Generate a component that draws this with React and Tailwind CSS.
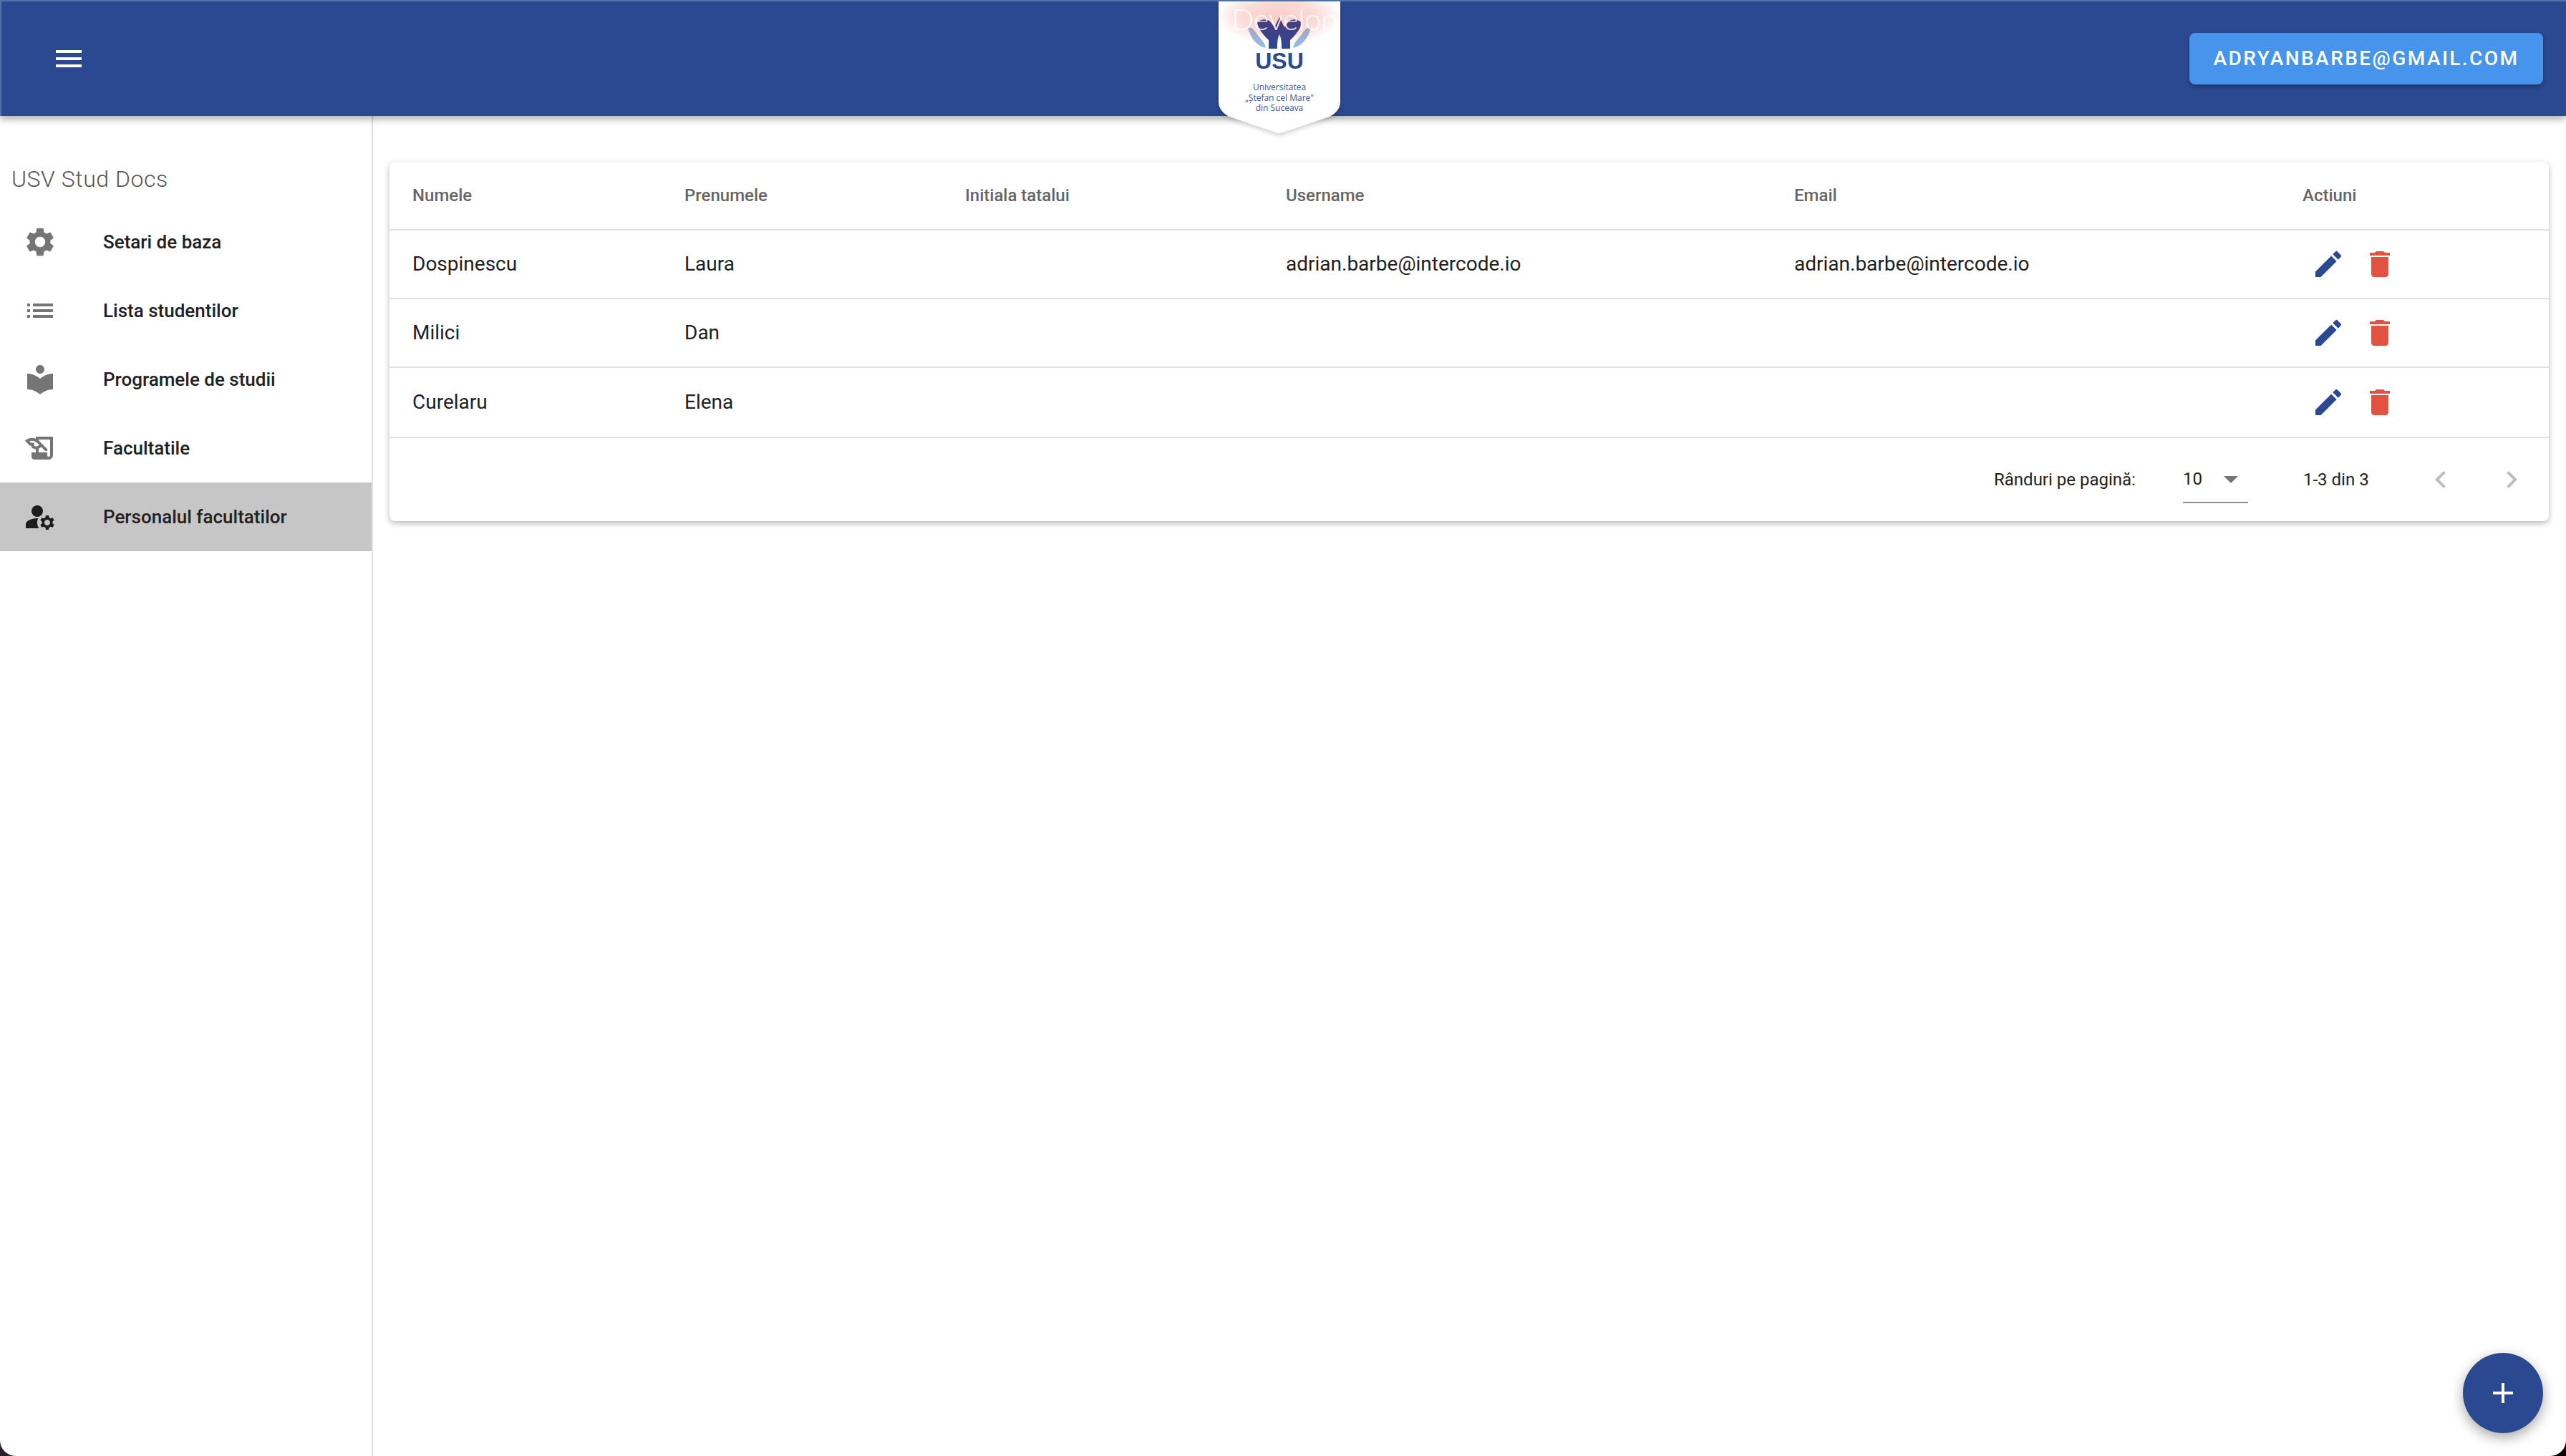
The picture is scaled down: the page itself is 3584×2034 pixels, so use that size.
import React from 'react';
import {
  MdMenu, MdSettings, MdList, MdLocalLibrary, MdHistoryEdu, MdManageAccounts,
  MdEdit, MdDelete, MdAdd, MdArrowDropDown, MdChevronLeft, MdChevronRight,
} from 'react-icons/md';

const navItems = [
  { label: 'Setari de baza', Icon: MdSettings },
  { label: 'Lista studentilor', Icon: MdList },
  { label: 'Programele de studii', Icon: MdLocalLibrary },
  { label: 'Facultatile', Icon: MdHistoryEdu },
  { label: 'Personalul facultatilor', Icon: MdManageAccounts, active: true },
];

const people = [
  { first: 'Dospinescu', last: 'Laura', username: 'adrian.barbe@intercode.io', email: 'adrian.barbe@intercode.io' },
  { first: 'Milici', last: 'Dan', username: '', email: '' },
  { first: 'Curelaru', last: 'Elena', username: '', email: '' },
];

const headers = ['Numele', 'Prenumele', 'Initiala tatalui', 'Username', 'Email', 'Actiuni'];

const Logo = () => (
  <div className="absolute left-[1702px] top-[2px] z-20 w-[170px] h-[188px]">
    <svg viewBox="0 0 170 188" className="absolute inset-0 w-[170px] h-[188px] drop-shadow-[0_3px_3px_rgba(0,0,0,0.18)]">
      <defs>
        <radialGradient id="glow" cx="50%" cy="30%" r="52%">
          <stop offset="0%" stopColor="#f9cdc8" />
          <stop offset="60%" stopColor="#fbdcd8" />
          <stop offset="100%" stopColor="#ffffff" />
        </radialGradient>
        <linearGradient id="hands" x1="0" y1="0" x2="0" y2="1">
          <stop offset="0%" stopColor="#4e3a7d" />
          <stop offset="100%" stopColor="#2b4991" />
        </linearGradient>
        <linearGradient id="wings" x1="0" y1="0" x2="0" y2="1">
          <stop offset="0%" stopColor="#a9a3c4" />
          <stop offset="100%" stopColor="#8fc0e6" />
        </linearGradient>
      </defs>
      <path d="M0 0H170V140C170 150 163 157 155 161L90 183Q85 185 80 183L15 161C7 157 0 150 0 140Z" fill="#ffffff" />
      <path d="M0 0H170V72H0Z" fill="url(#glow)" />
      <path d="M41 37C46 35 50 40 54 46C60 54 64 56 66 65C54 62 46 54 41 37Z" fill="url(#wings)" />
      <path d="M129 37C124 35 120 40 116 46C110 54 106 56 104 65C116 62 124 54 129 37Z" fill="url(#wings)" />
      <path d="M54 30C58 24 68 24 72 28L78 36L85 22L92 36L98 28C102 24 112 24 116 30C114 40 106 48 100 54L100 66L88 66C88 58 88 52 85 46C82 52 82 58 82 66L70 66L70 54C64 48 56 40 54 30Z" fill="url(#hands)" />
    </svg>
    <div className="absolute left-[18px] top-[1px] font-['Lato',sans-serif] font-light text-[41px] leading-[48px] text-white/90">Develop</div>
    <div className="absolute inset-x-0 top-[66px] text-center font-['Liberation_Sans',sans-serif] font-bold text-[32px] leading-[34px] text-[#2b4991]">USU</div>
    <div className="absolute inset-x-0 top-[113px] text-center font-['Open_Sans',sans-serif] text-[12px] leading-[14.5px] text-[#3a55a0]">
      <div>Universitatea</div>
      <div>„Ștefan cel Mare"</div>
      <div>din Suceava</div>
    </div>
  </div>
);

const App = () => {
  return (
    <div className="h-screen bg-gradient-to-r from-[#2b2030] to-black overflow-hidden">
      <div className="relative h-full flex flex-col bg-white rounded-b-[22px] overflow-hidden font-['Roboto',sans-serif]">
        <header className="relative z-10 h-[162px] shrink-0 flex items-center justify-between bg-[#2b4991] border-t-2 border-l-2 border-[#4e74aa] pl-[70px] pr-[32px] shadow-[0_4px_10px_rgba(0,0,0,0.35)]">
          <MdMenu className="w-[48px] h-[48px] text-white" />
          <button className="h-[72px] w-[494px] rounded-[8px] bg-[#4694eb] text-white text-[28px] font-medium tracking-[2.45px] shadow-[0_3px_6px_rgba(0,0,0,0.3)]">
            ADRYANBARBE@GMAIL.COM
          </button>
        </header>
        <Logo />

        <div className="flex flex-1 min-h-0">
          <aside className="w-[521px] shrink-0 border-r-2 border-[#e0e0e0] pt-[66px]">
            <div className="h-[44px] pl-[16px] flex items-center text-[32px] font-light tracking-[0.55px] text-[#555555]">USV Stud Docs</div>
            <nav className="mt-[18px]">
              {navItems.map(({ label, Icon, active }) => (
                <div key={label} className={`h-[96px] flex items-center pl-[32px] ${active ? 'bg-[#c6c6c6]' : ''}`}>
                  <Icon className={`w-[48px] h-[48px] ${active ? 'text-[#1c1c1c]' : 'text-[#757575]'}`} />
                  <span className="ml-[64px] text-[26px] font-medium text-[#212121]">{label}</span>
                </div>
              ))}
            </nav>
          </aside>

          <main className="flex-1 min-w-0 pt-[64px] pl-[23px] pr-[24px]">
            <div className="rounded-[8px] bg-white shadow-[0_3px_8px_rgba(0,0,0,0.28)]">
              <table className="w-full table-fixed border-collapse">
                <colgroup>
                  <col className="w-[412px]" />
                  <col className="w-[392px]" />
                  <col className="w-[448px]" />
                  <col className="w-[710px]" />
                  <col className="w-[710px]" />
                  <col />
                </colgroup>
                <thead>
                  <tr className="h-[95px] border-b-2 border-[#e0e0e0]">
                    {headers.map((h, i) => (
                      <th key={h} className={`text-left text-[24px] font-medium text-[#666666] ${i === 0 ? 'pl-[32px]' : ''}`}>{h}</th>
                    ))}
                  </tr>
                </thead>
                <tbody>
                  {people.map((p, i) => (
                    <tr key={p.first} className={`border-b-2 border-[#e0e0e0] text-[28px] text-[#212121] ${i === 2 ? 'h-[98px]' : 'h-[96px]'}`}>
                      <td className="pl-[32px]">{p.first}</td>
                      <td>{p.last}</td>
                      <td></td>
                      <td>{p.username}</td>
                      <td>{p.email}</td>
                      <td>
                        <div className="flex items-center gap-[24px] pl-[12px]">
                          <MdEdit className="w-[48px] h-[48px] text-[#2b4991]" />
                          <MdDelete className="w-[48px] h-[48px] text-[#e25241]" />
                        </div>
                      </td>
                    </tr>
                  ))}
                </tbody>
              </table>
              <div className="h-[116px] flex items-center text-[24px] text-[#212121] pl-[2241px]">
                <span className="w-[264px]">Rânduri pe pagină:</span>
                <div className="relative w-[91px] h-[66px] flex items-center border-b-2 border-[#8f8f8f]">
                  <span>10</span>
                  <MdArrowDropDown className="absolute right-[0px] w-[48px] h-[48px] text-[#757575]" />
                </div>
                <span className="ml-[77px] w-[100px]">1-3 din 3</span>
                <MdChevronLeft className="ml-[68px] w-[48px] h-[48px] text-[#bdbdbd]" />
                <MdChevronRight className="ml-[51px] w-[48px] h-[48px] text-[#bdbdbd]" />
              </div>
            </div>
          </main>
        </div>

        <button className="absolute right-[32px] bottom-[32px] w-[112px] h-[112px] rounded-full bg-[#2b4991] flex items-center justify-center shadow-[0_6px_18px_rgba(0,0,0,0.35)]">
          <MdAdd className="w-[48px] h-[48px] text-white" />
        </button>
      </div>
    </div>
  );
};

export default App;
